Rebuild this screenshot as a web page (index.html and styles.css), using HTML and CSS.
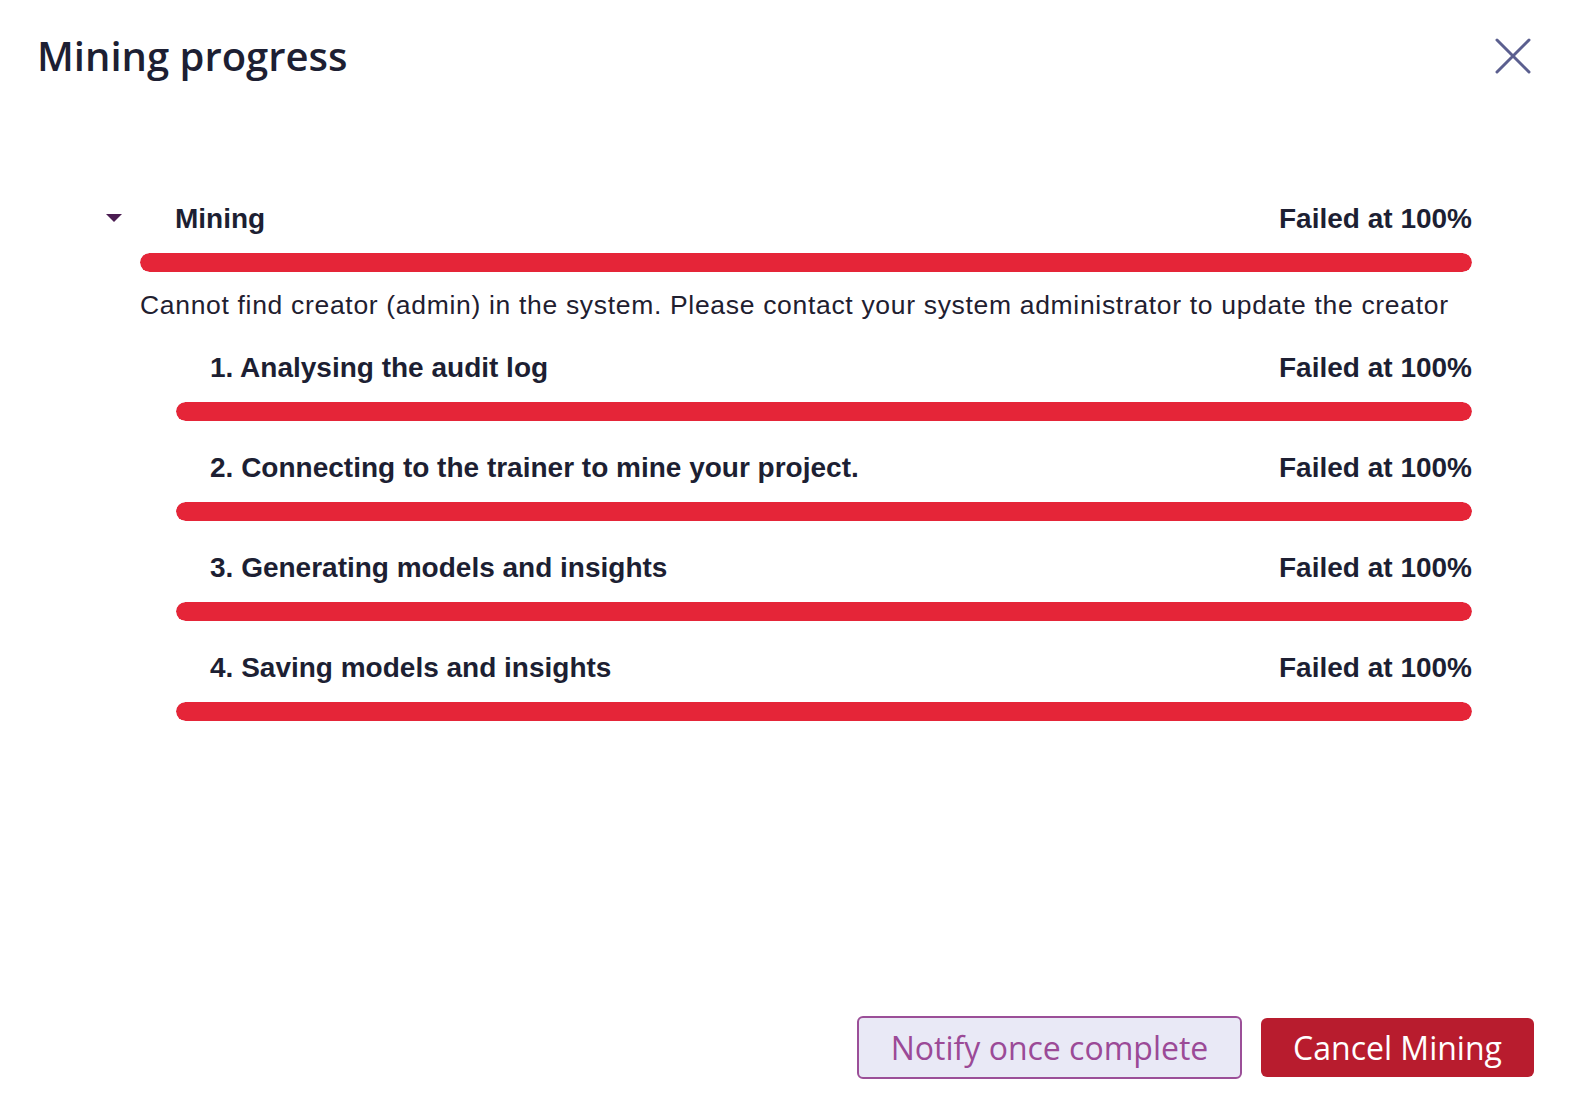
FILE: index.html
```html
<!DOCTYPE html>
<html lang="en">
<head>
<meta charset="utf-8">
<title>Mining progress</title>
<link rel="stylesheet" href="styles.css">
</head>
<body>
<div class="dialog">
  <header class="header">
    <h1 class="title">Mining progress</h1>
    <button class="close" aria-label="Close">
      <svg width="36" height="36" viewBox="0 0 36 36"><path d="M2 2 L34 34 M34 2 L2 34" stroke="#5b5f8f" stroke-width="3" stroke-linecap="round" fill="none"/></svg>
    </button>
  </header>
  <main class="content">
    <div class="main-row">
      <span class="caret"></span>
      <span class="label">Mining</span>
      <span class="status">Failed at 100%</span>
    </div>
    <div class="bar main-bar"><div class="fill" style="width:100%"></div></div>
    <p class="message">Cannot find creator (admin) in the system. Please contact your system administrator to update the creator</p>
    <div class="steps">
      <div class="step">
        <div class="step-row"><span class="label">1. Analysing the audit log</span><span class="status">Failed at 100%</span></div>
        <div class="bar"><div class="fill" style="width:100%"></div></div>
      </div>
      <div class="step">
        <div class="step-row"><span class="label">2. Connecting to the trainer to mine your project.</span><span class="status">Failed at 100%</span></div>
        <div class="bar"><div class="fill" style="width:100%"></div></div>
      </div>
      <div class="step">
        <div class="step-row"><span class="label">3. Generating models and insights</span><span class="status">Failed at 100%</span></div>
        <div class="bar"><div class="fill" style="width:100%"></div></div>
      </div>
      <div class="step">
        <div class="step-row"><span class="label">4. Saving models and insights</span><span class="status">Failed at 100%</span></div>
        <div class="bar"><div class="fill" style="width:100%"></div></div>
      </div>
    </div>
  </main>
  <footer class="footer">
    <button class="btn btn-secondary">Notify once complete</button>
    <button class="btn btn-danger">Cancel Mining</button>
  </footer>
</div>
</body>
</html>
```
FILE: styles.css
```css
* { box-sizing: border-box; }
html, body { margin: 0; padding: 0; background: #fff; }
body { font-family: "Liberation Sans", Arial, sans-serif; color: #1d1f33; }
.dialog {
  height: 100vh;
  display: flex;
  flex-direction: column;
}
.header {
  display: flex;
  justify-content: space-between;
  align-items: flex-start;
  padding: 32px 37px 0 37px;
}
.title {
  margin: 0;
  font-family: "Open Sans", sans-serif;
  font-weight: 600;
  font-size: 40px;
  line-height: 48px;
  color: #1d1f33;
}
.close {
  border: 0;
  background: none;
  padding: 0;
  margin: 6px 8px 0 0;
  width: 36px;
  height: 36px;
  cursor: pointer;
}
.close svg { display: block; }
.content {
  padding: 0 104px 0 106px;
  margin-top: 122px;
}
.main-row {
  display: flex;
  align-items: center;
  height: 34px;
}
.caret {
  width: 0; height: 0;
  border-left: 8px solid transparent;
  border-right: 8px solid transparent;
  border-top: 8px solid #4b1d52;
  margin-right: 53px;
  margin-top: -3px;
}
.label, .status {
  font-weight: 700;
  font-size: 28px;
  line-height: 34px;
  white-space: nowrap;
}
.status { margin-left: auto; }
.bar {
  height: 19px;
  border-radius: 10px;
  background: #f2f2f5;
  overflow: hidden;
}
.fill {
  height: 100%;
  background: #e52538;
  border-radius: 10px;
}
.main-bar { margin: 17px 0 0 34px; }
.message {
  margin: 18px 0 0 34px;
  font-size: 26.5px;
  letter-spacing: 0.68px;
  line-height: 30px;
  color: #1f2030;
  white-space: nowrap;
}
.steps { padding-left: 70px; }
.step { margin-top: 30px; }
.step:first-child { margin-top: 31px; }
.step-row {
  display: flex;
  align-items: center;
  height: 34px;
  padding-left: 34px;
}
.step .bar { margin-top: 17px; }
.footer {
  margin-top: auto;
  display: flex;
  justify-content: flex-end;
  align-items: center;
  gap: 19px;
  padding: 0 42px 19px 0;
}
.btn {
  font-family: "Open Sans", sans-serif;
  font-size: 32px;
  line-height: 40px;
  border-radius: 6px;
  cursor: pointer;
}
.btn-secondary {
  width: 385px;
  height: 63px;
  background: #e9e9f6;
  border: 2px solid #9b4f98;
  color: #9b4a97;
}
.btn-danger {
  width: 273px;
  height: 59px;
  background: #b81c2e;
  border: 0;
  color: #fff;
}
```
